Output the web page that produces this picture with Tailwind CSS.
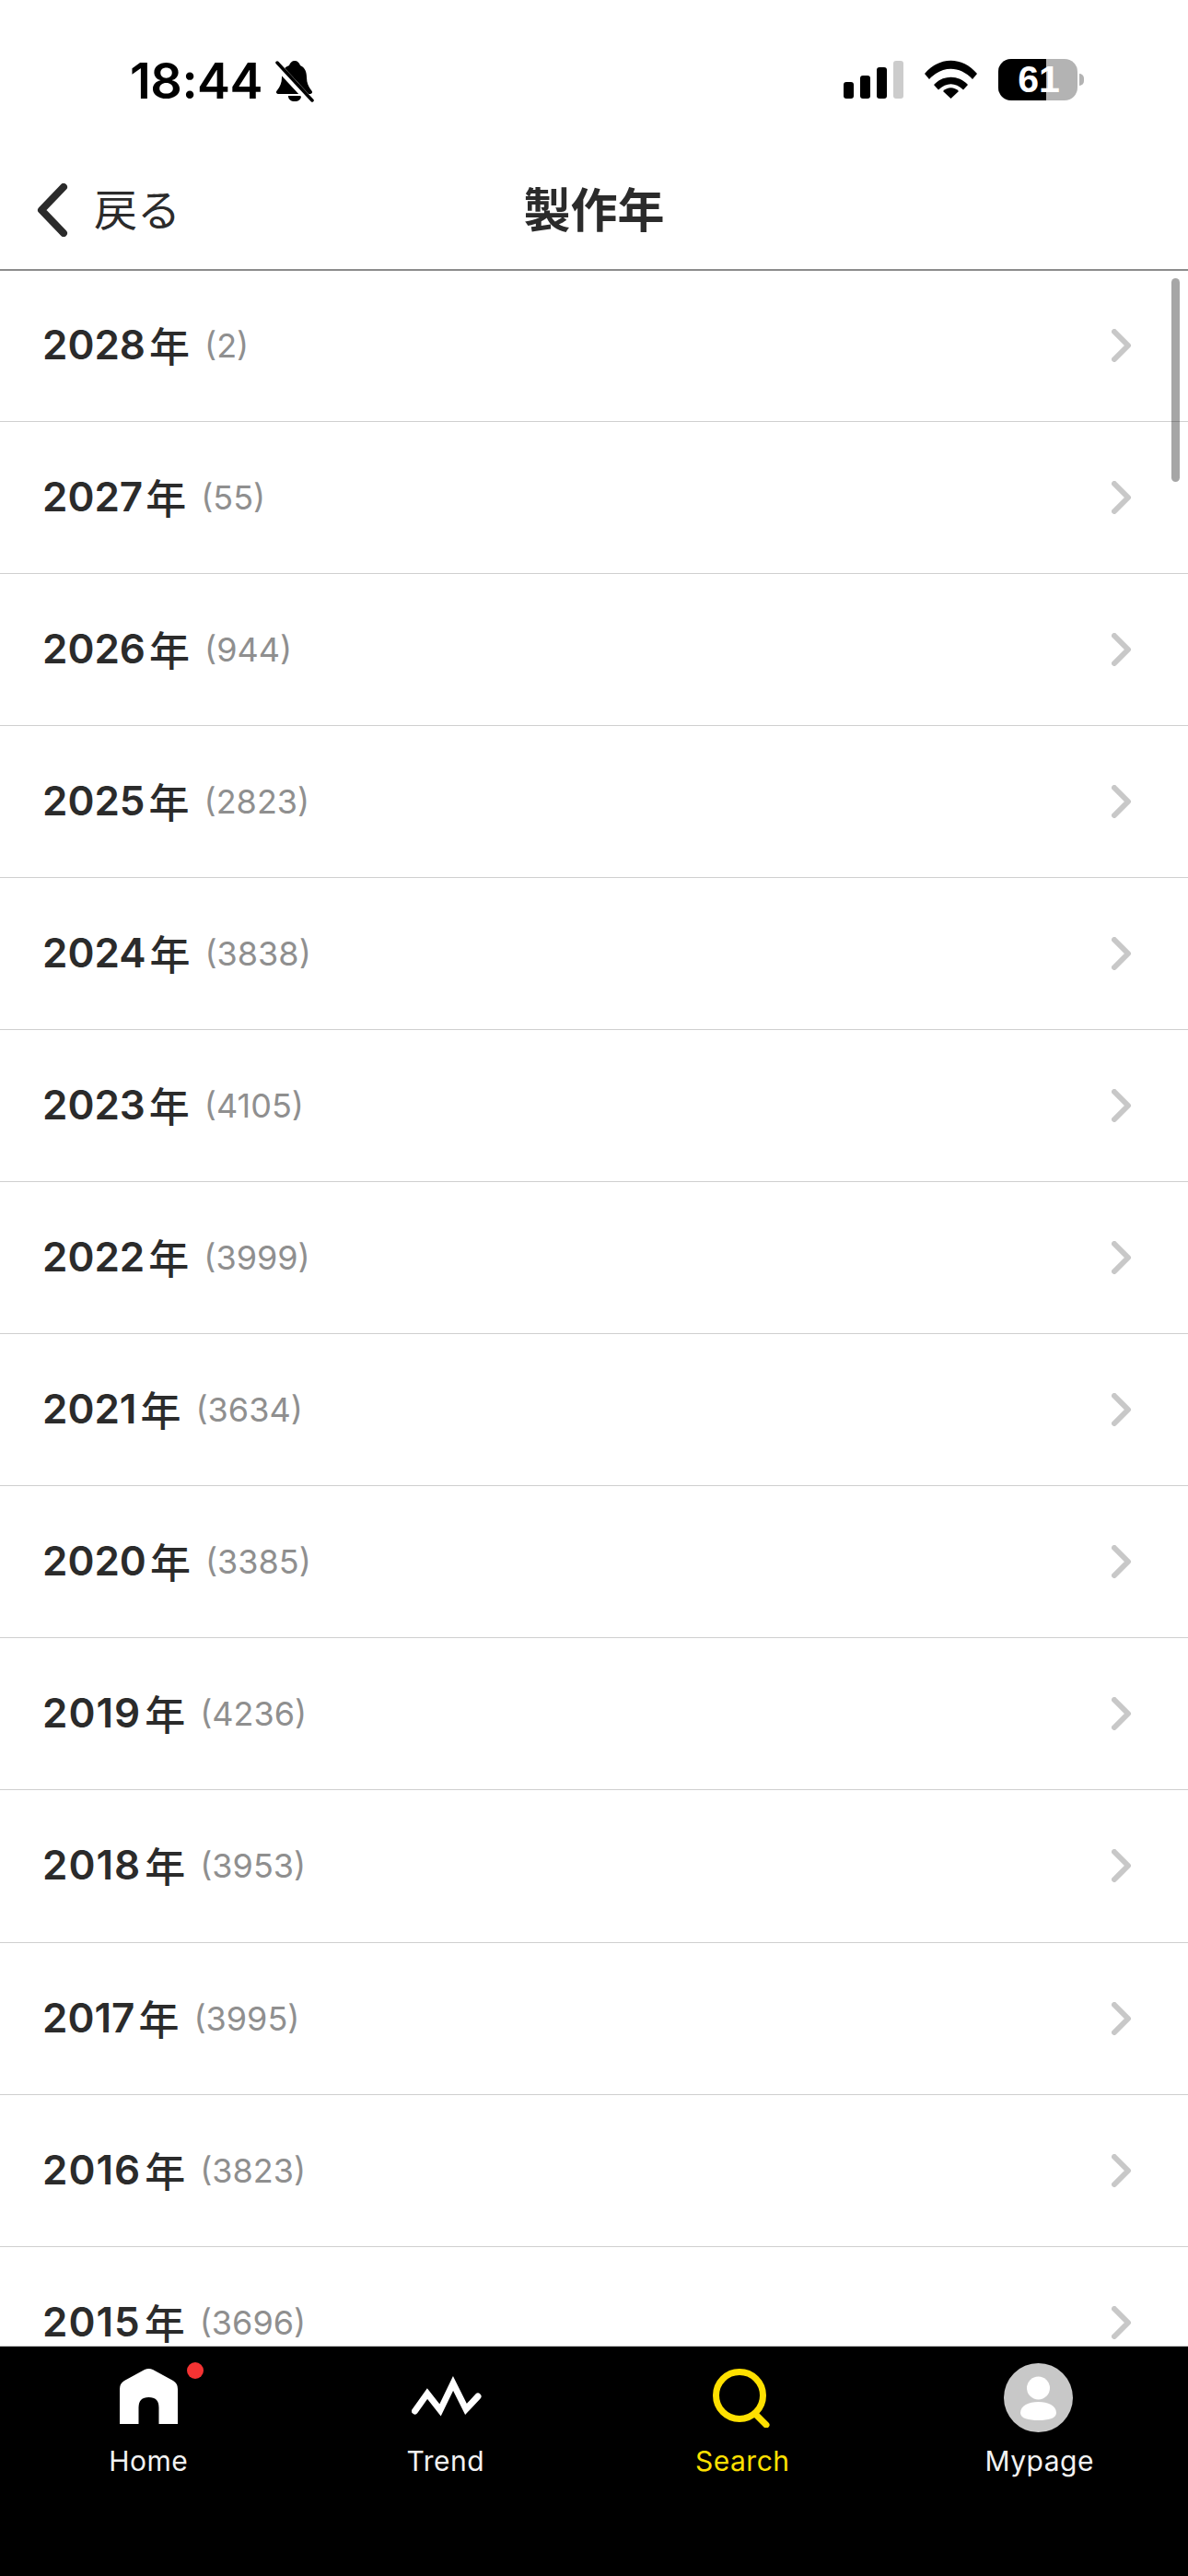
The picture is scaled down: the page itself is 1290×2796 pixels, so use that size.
<!DOCTYPE html>
<html lang="ja">
<head>
<meta charset="utf-8">
<script src="https://cdn.jsdelivr.net/npm/@tailwindcss/browser@4"></script>
</head>
<body class="bg-white">
<div class="relative w-[1290px] h-[2796px] overflow-hidden bg-white flex flex-col font-['Inter','Noto_Sans_CJK_JP',sans-serif]">
  <!-- status bar -->
  <div class="h-[176px] shrink-0 relative">
    <div class="absolute left-[141px] top-[54px] flex items-center">
      <span class="text-[54px] leading-[68px] font-semibold text-black tracking-[-0.5px]">18:44</span>
      <svg class="ml-[13px] w-[44px] h-[46px]" viewBox="0 0 44 46"><path d="M22 1c3 0 5 2 6 5 5 2 7 7 7 13 0 6 2 10 5 14 2 2 1 4-2 4H5c-3 0-4-2-2-4 3-4 5-8 5-14 0-6 2-11 8-13 1-3 3-5 6-5z" fill="#000"/><path d="M15 39h14c0 4-3 6-7 6s-7-2-7-6z" fill="#000"/><path d="M1 4 L40 46" stroke="#fff" stroke-width="8"/><path d="M3 3 L41 44" stroke="#000" stroke-width="3.5" stroke-linecap="round"/></svg>
    </div>
    <div class="absolute left-[916px] top-[64px] flex items-start">
      <svg class="w-[65px] h-[43px]" viewBox="0 0 65 43"><rect x="0" y="25" width="11" height="18" rx="3" fill="#000"/><rect x="18" y="18" width="11" height="25" rx="3" fill="#000"/><rect x="36" y="9" width="11" height="34" rx="3" fill="#000"/><rect x="54" y="2" width="11" height="41" rx="3" fill="#ccc"/></svg>
      <svg class="ml-[23px] w-[57px] h-[43px]" viewBox="0 0 57 43"><path d="M0 16 C16 -3 41 -3 57 16 L52 22 C38 7 19 7 5 22 Z" fill="#000"/><path d="M10 28 C20 17 37 17 47 28 L42 33.500 C33 25 24 25 15 33.500 Z" fill="#000"/><path d="M20 37 C25 32 32 32 37 37 L28.500 45 Z" fill="#000" transform="translate(0 -2)"/></svg>
      <div class="relative ml-[23px] w-[86px] h-[45px] rounded-[14px] bg-[#b3b3b3] overflow-hidden">
        <div class="absolute left-0 top-0 bottom-0 w-[52px] bg-black"></div>
        <span class="absolute left-0 right-0 top-0 pl-[2px] text-center text-[41px] leading-[45px] font-bold text-white font-['Liberation_Sans',sans-serif]">61</span>
      </div>
      <div class="mt-[16px] ml-[2px] w-[5px] h-[13px] rounded-r-full bg-[#b3b3b3]"></div>
    </div>
  </div>
  <!-- header -->
  <header class="h-[118px] shrink-0 relative border-b-[2px] border-[#8c8c8c] flex items-center justify-center">
    <div class="absolute left-[40px] top-[23px] flex items-center">
      <svg class="w-[34px] h-[58px]" viewBox="0 0 34 58"><path d="M29 4 L5 29 L29 54" fill="none" stroke="#2b2b2b" stroke-width="8" stroke-linecap="round" stroke-linejoin="round"/></svg>
      <span class="ml-[28px] -mt-[6px] text-[47px] leading-[58px] text-[#2b2b2b] font-normal font-['Noto_Sans_CJK_JP',sans-serif]">戻る</span>
    </div>
    <h1 class="text-[51px] leading-[60px] mb-[18px] font-bold text-[#2b2b2b] font-['Noto_Sans_CJK_JP',sans-serif]">製作年</h1>
  </header>
  <!-- list -->
  <main class="relative flex-1 min-h-0">
    <div class="absolute right-[9px] top-[8px] w-[9px] h-[221px] rounded-full bg-black/35"></div>
    <ul class="flex flex-col -mt-[1.5px] text-[#2b2b2b]">
      <li class="h-[165.1px] border-b-[1.5px] border-[#cfcfcf] flex items-center pl-[46px] pr-[61px]"><span class="-mt-[2px] text-[44px] leading-[44px] font-semibold">2028</span><span class="-mt-[2px] ml-[4px] text-[44px] leading-[44px] font-medium font-['Noto_Sans_CJK_JP',sans-serif]">年</span><span class="ml-[16px] text-[36px] leading-[44px] text-[#8f8f8f] font-normal">(2)</span><svg class="ml-auto w-[22px] h-[36px]" viewBox="0 0 22 36"><path d="M3 3 L18 18 L3 33" fill="none" stroke="#c8c8c8" stroke-width="6" stroke-linecap="round" stroke-linejoin="round"/></svg></li>
      <li class="h-[165.1px] border-b-[1.5px] border-[#cfcfcf] flex items-center pl-[46px] pr-[61px]"><span class="-mt-[2px] text-[44px] leading-[44px] font-semibold">2027</span><span class="-mt-[2px] ml-[3px] text-[44px] leading-[44px] font-medium font-['Noto_Sans_CJK_JP',sans-serif]">年</span><span class="ml-[16px] text-[36px] leading-[44px] text-[#8f8f8f] font-normal">(55)</span><svg class="ml-auto w-[22px] h-[36px]" viewBox="0 0 22 36"><path d="M3 3 L18 18 L3 33" fill="none" stroke="#c8c8c8" stroke-width="6" stroke-linecap="round" stroke-linejoin="round"/></svg></li>
      <li class="h-[165.1px] border-b-[1.5px] border-[#cfcfcf] flex items-center pl-[46px] pr-[61px]"><span class="-mt-[2px] text-[44px] leading-[44px] font-semibold">2026</span><span class="-mt-[2px] ml-[4px] text-[44px] leading-[44px] font-medium font-['Noto_Sans_CJK_JP',sans-serif]">年</span><span class="ml-[16px] text-[36px] leading-[44px] text-[#8f8f8f] font-normal">(944)</span><svg class="ml-auto w-[22px] h-[36px]" viewBox="0 0 22 36"><path d="M3 3 L18 18 L3 33" fill="none" stroke="#c8c8c8" stroke-width="6" stroke-linecap="round" stroke-linejoin="round"/></svg></li>
      <li class="h-[165.1px] border-b-[1.5px] border-[#cfcfcf] flex items-center pl-[46px] pr-[61px]"><span class="-mt-[2px] text-[44px] leading-[44px] font-semibold">2025</span><span class="-mt-[2px] ml-[4px] text-[44px] leading-[44px] font-medium font-['Noto_Sans_CJK_JP',sans-serif]">年</span><span class="ml-[16px] text-[36px] leading-[44px] text-[#8f8f8f] font-normal">(2823)</span><svg class="ml-auto w-[22px] h-[36px]" viewBox="0 0 22 36"><path d="M3 3 L18 18 L3 33" fill="none" stroke="#c8c8c8" stroke-width="6" stroke-linecap="round" stroke-linejoin="round"/></svg></li>
      <li class="h-[165.1px] border-b-[1.5px] border-[#cfcfcf] flex items-center pl-[46px] pr-[61px]"><span class="-mt-[2px] text-[44px] leading-[44px] font-semibold">2024</span><span class="-mt-[2px] ml-[4px] text-[44px] leading-[44px] font-medium font-['Noto_Sans_CJK_JP',sans-serif]">年</span><span class="ml-[16px] text-[36px] leading-[44px] text-[#8f8f8f] font-normal">(3838)</span><svg class="ml-auto w-[22px] h-[36px]" viewBox="0 0 22 36"><path d="M3 3 L18 18 L3 33" fill="none" stroke="#c8c8c8" stroke-width="6" stroke-linecap="round" stroke-linejoin="round"/></svg></li>
      <li class="h-[165.1px] border-b-[1.5px] border-[#cfcfcf] flex items-center pl-[46px] pr-[61px]"><span class="-mt-[2px] text-[44px] leading-[44px] font-semibold">2023</span><span class="-mt-[2px] ml-[4px] text-[44px] leading-[44px] font-medium font-['Noto_Sans_CJK_JP',sans-serif]">年</span><span class="ml-[16px] text-[36px] leading-[44px] text-[#8f8f8f] font-normal">(4105)</span><svg class="ml-auto w-[22px] h-[36px]" viewBox="0 0 22 36"><path d="M3 3 L18 18 L3 33" fill="none" stroke="#c8c8c8" stroke-width="6" stroke-linecap="round" stroke-linejoin="round"/></svg></li>
      <li class="h-[165.1px] border-b-[1.5px] border-[#cfcfcf] flex items-center pl-[46px] pr-[61px]"><span class="-mt-[2px] text-[44px] leading-[44px] font-semibold">2022</span><span class="-mt-[2px] ml-[4px] text-[44px] leading-[44px] font-medium font-['Noto_Sans_CJK_JP',sans-serif]">年</span><span class="ml-[16px] text-[36px] leading-[44px] text-[#8f8f8f] font-normal">(3999)</span><svg class="ml-auto w-[22px] h-[36px]" viewBox="0 0 22 36"><path d="M3 3 L18 18 L3 33" fill="none" stroke="#c8c8c8" stroke-width="6" stroke-linecap="round" stroke-linejoin="round"/></svg></li>
      <li class="h-[165.1px] border-b-[1.5px] border-[#cfcfcf] flex items-center pl-[46px] pr-[61px]"><span class="-mt-[2px] text-[44px] leading-[44px] font-semibold">2021</span><span class="-mt-[2px] ml-[4px] text-[44px] leading-[44px] font-medium font-['Noto_Sans_CJK_JP',sans-serif]">年</span><span class="ml-[16px] text-[36px] leading-[44px] text-[#8f8f8f] font-normal">(3634)</span><svg class="ml-auto w-[22px] h-[36px]" viewBox="0 0 22 36"><path d="M3 3 L18 18 L3 33" fill="none" stroke="#c8c8c8" stroke-width="6" stroke-linecap="round" stroke-linejoin="round"/></svg></li>
      <li class="h-[165.1px] border-b-[1.5px] border-[#cfcfcf] flex items-center pl-[46px] pr-[61px]"><span class="-mt-[2px] text-[44px] leading-[44px] font-semibold">2020</span><span class="-mt-[2px] ml-[4px] text-[44px] leading-[44px] font-medium font-['Noto_Sans_CJK_JP',sans-serif]">年</span><span class="ml-[16px] text-[36px] leading-[44px] text-[#8f8f8f] font-normal">(3385)</span><svg class="ml-auto w-[22px] h-[36px]" viewBox="0 0 22 36"><path d="M3 3 L18 18 L3 33" fill="none" stroke="#c8c8c8" stroke-width="6" stroke-linecap="round" stroke-linejoin="round"/></svg></li>
      <li class="h-[165.1px] border-b-[1.5px] border-[#cfcfcf] flex items-center pl-[46px] pr-[61px]"><span class="-mt-[2px] text-[44px] leading-[44px] font-semibold tracking-[1px]">2019</span><span class="-mt-[2px] ml-[4px] text-[44px] leading-[44px] font-medium font-['Noto_Sans_CJK_JP',sans-serif]">年</span><span class="ml-[16px] text-[36px] leading-[44px] text-[#8f8f8f] font-normal">(4236)</span><svg class="ml-auto w-[22px] h-[36px]" viewBox="0 0 22 36"><path d="M3 3 L18 18 L3 33" fill="none" stroke="#c8c8c8" stroke-width="6" stroke-linecap="round" stroke-linejoin="round"/></svg></li>
      <li class="h-[165.1px] border-b-[1.5px] border-[#cfcfcf] flex items-center pl-[46px] pr-[61px]"><span class="-mt-[2px] text-[44px] leading-[44px] font-semibold tracking-[1px]">2018</span><span class="-mt-[2px] ml-[4px] text-[44px] leading-[44px] font-medium font-['Noto_Sans_CJK_JP',sans-serif]">年</span><span class="ml-[16px] text-[36px] leading-[44px] text-[#8f8f8f] font-normal">(3953)</span><svg class="ml-auto w-[22px] h-[36px]" viewBox="0 0 22 36"><path d="M3 3 L18 18 L3 33" fill="none" stroke="#c8c8c8" stroke-width="6" stroke-linecap="round" stroke-linejoin="round"/></svg></li>
      <li class="h-[165.1px] border-b-[1.5px] border-[#cfcfcf] flex items-center pl-[46px] pr-[61px]"><span class="-mt-[2px] text-[44px] leading-[44px] font-semibold">2017</span><span class="-mt-[2px] ml-[4px] text-[44px] leading-[44px] font-medium font-['Noto_Sans_CJK_JP',sans-serif]">年</span><span class="ml-[16px] text-[36px] leading-[44px] text-[#8f8f8f] font-normal">(3995)</span><svg class="ml-auto w-[22px] h-[36px]" viewBox="0 0 22 36"><path d="M3 3 L18 18 L3 33" fill="none" stroke="#c8c8c8" stroke-width="6" stroke-linecap="round" stroke-linejoin="round"/></svg></li>
      <li class="h-[165.1px] border-b-[1.5px] border-[#cfcfcf] flex items-center pl-[46px] pr-[61px]"><span class="-mt-[2px] text-[44px] leading-[44px] font-semibold tracking-[1px]">2016</span><span class="-mt-[2px] ml-[4px] text-[44px] leading-[44px] font-medium font-['Noto_Sans_CJK_JP',sans-serif]">年</span><span class="ml-[16px] text-[36px] leading-[44px] text-[#8f8f8f] font-normal">(3823)</span><svg class="ml-auto w-[22px] h-[36px]" viewBox="0 0 22 36"><path d="M3 3 L18 18 L3 33" fill="none" stroke="#c8c8c8" stroke-width="6" stroke-linecap="round" stroke-linejoin="round"/></svg></li>
      <li class="h-[165.1px] border-b-[1.5px] border-[#cfcfcf] flex items-center pl-[46px] pr-[61px]"><span class="-mt-[2px] text-[44px] leading-[44px] font-semibold tracking-[1px]">2015</span><span class="-mt-[2px] ml-[4px] text-[44px] leading-[44px] font-medium font-['Noto_Sans_CJK_JP',sans-serif]">年</span><span class="ml-[16px] text-[36px] leading-[44px] text-[#8f8f8f] font-normal">(3696)</span><svg class="ml-auto w-[22px] h-[36px]" viewBox="0 0 22 36"><path d="M3 3 L18 18 L3 33" fill="none" stroke="#c8c8c8" stroke-width="6" stroke-linecap="round" stroke-linejoin="round"/></svg></li>
    </ul>
  </main>
  <!-- tab bar -->
  <nav class="relative z-10 h-[250px] shrink-0 bg-black border-t-[1.5px] border-[#c4c4c4] grid grid-cols-4 text-[30px] leading-[40px] tracking-[0.5px] text-[#f2f2f2]">
    <div class="flex flex-col items-center">
      <div class="relative h-[90px] w-full">
        <svg class="absolute left-[130px] top-[24px] w-[63px] h-[60px]" viewBox="0 0 63 60"><path d="M27 1 Q31.500 -1 36 1 L58 13 Q63 16 63 22 V60 H42.500 V42 Q42.500 31 31.500 31 Q20.500 31 20.500 42 V60 H0 V22 Q0 16 5 13 Z" fill="#fff"/></svg>
        <span class="absolute left-[203px] top-[17px] w-[18px] h-[18px] rounded-full bg-[#f53333]"></span>
      </div>
      <span class="mt-[14px]">Home</span>
    </div>
    <div class="flex flex-col items-center">
      <div class="relative h-[90px] w-full">
        <svg class="absolute left-[124px] top-[32px] w-[76px] h-[44px]" viewBox="0 0 76 44"><path d="M3.500 38 L17 19 L31 37 L45 8 L59 36 L72 22" fill="none" stroke="#fff" stroke-width="7" stroke-linejoin="miter" stroke-linecap="round"/></svg>
      </div>
      <span class="mt-[14px]">Trend</span>
    </div>
    <div class="flex flex-col items-center text-[#ffe000]">
      <div class="relative h-[90px] w-full">
        <svg class="absolute left-[129px] top-[24px] w-[62px] h-[64px]" viewBox="0 0 62 64"><circle cx="29" cy="29" r="25.500" fill="none" stroke="#ffe000" stroke-width="7"/><path d="M46 49 L58 61" fill="none" stroke="#ffe000" stroke-width="7" stroke-linecap="round"/></svg>
      </div>
      <span class="mt-[14px]">Search</span>
    </div>
    <div class="flex flex-col items-center">
      <div class="relative h-[90px] w-full">
        <svg class="absolute left-[122px] top-[18px] w-[75px] h-[75px]" viewBox="0 0 75 75"><circle cx="37.500" cy="37.500" r="37.500" fill="#c8c8c8"/><ellipse cx="37.500" cy="27" rx="12.500" ry="12.500" fill="#fff"/><path d="M18 54 C18 46 27 42 37.500 42 C48 42 57 46 57 54 C57 60 48 62 37.500 62 C27 62 18 60 18 54 Z" fill="#fff"/></svg>
      </div>
      <span class="mt-[14px]">Mypage</span>
    </div>
  </nav>
</div>
</body>
</html>
